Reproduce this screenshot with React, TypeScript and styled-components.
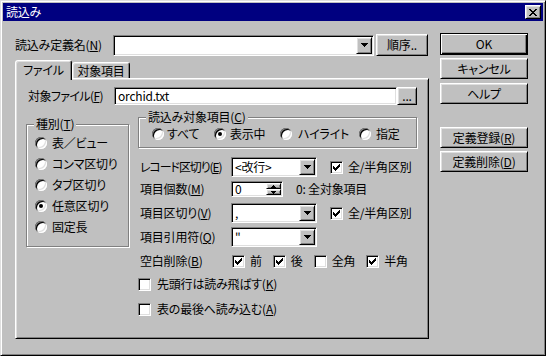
import React from 'react'
import styled, { createGlobalStyle, css } from 'styled-components'

const GlobalStyle = createGlobalStyle`
  html, body { margin: 0; padding: 0; background: #c0c0c0; }
  body {
    font-family: "Noto Sans CJK JP", "Liberation Sans", sans-serif;
    font-size: 12px;
    color: #000;
  }
  * { box-sizing: border-box; }
  u { text-underline-offset: 1px; }
`

const raised = css`
  border: 1px solid;
  border-color: #fff #000 #000 #fff;
  box-shadow: inset 1px 1px 0 #dfdfdf, inset -1px -1px 0 #808080;
`

const sunken = css`
  border: 1px solid;
  border-color: #808080 #fff #fff #808080;
  box-shadow: inset 1px 1px 0 #000, inset -1px -1px 0 #dfdfdf;
`

const Window = styled.div`
  width: 546px;
  height: 356px;
  background: #c0c0c0;
  border: 1px solid;
  border-color: #dfdfdf #000 #000 #dfdfdf;
  box-shadow: inset 1px 1px 0 #fff, inset -1px -1px 0 #808080;
  padding: 2px;
  display: flex;
  flex-direction: column;
  font-feature-settings: "palt";
  letter-spacing: -0.2px;
  line-height: 14px;
`

const TitleBar = styled.div`
  height: 18px;
  background: #000080;
  color: #fff;
  display: flex;
  align-items: center;
  justify-content: space-between;
  padding: 0 2px 0 3px;
`

const CloseButton = styled.div`
  ${raised};
  width: 16px;
  height: 14px;
  background: #c0c0c0;
  display: flex;
  align-items: center;
  justify-content: center;
`

const Body = styled.div`
  display: flex;
  gap: 11px;
  padding: 12px 0 0 12px;
`

const LeftColumn = styled.div`
  width: 414px;
  padding-top: 1px;
  display: flex;
  flex-direction: column;
`

const RightColumn = styled.div`
  width: 88px;
  display: flex;
  flex-direction: column;
`

const TopRow = styled.div`
  display: flex;
  align-items: center;
  height: 22px;
`

const Label = styled.span<{ $w?: number; $pl?: number; $ls?: number }>`
  width: ${(p) => (p.$w ? `${p.$w}px` : 'auto')};
  padding-left: ${(p) => p.$pl ?? 0}px;
  letter-spacing: ${(p) => p.$ls ?? -0.2}px;
  white-space: nowrap;
  flex-shrink: 0;
`

const Button = styled.div<{ $w: number; $h: number; $mt?: number; $ml?: number; $default?: boolean }>`
  ${raised};
  width: ${(p) => p.$w}px;
  height: ${(p) => p.$h}px;
  margin-top: ${(p) => p.$mt ?? 0}px;
  margin-left: ${(p) => p.$ml ?? 0}px;
  background: #c0c0c0;
  display: flex;
  align-items: center;
  justify-content: center;
  white-space: nowrap;
  flex-shrink: 0;
  ${(p) =>
    p.$default &&
    css`
      border-color: #000;
      box-shadow: inset 1px 1px 0 #fff, inset -1px -1px 0 #000, inset -2px -2px 0 #808080;
    `}
`

const Field = styled.div<{ $w: number; $h: number }>`
  ${sunken};
  width: ${(p) => p.$w}px;
  height: ${(p) => p.$h}px;
  background: #fff;
  padding: 1px;
  display: flex;
  align-items: center;
  flex-shrink: 0;
`

const FieldText = styled.span`
  flex: 1;
  padding-left: 2px;
  line-height: 12px;
  white-space: nowrap;
`

const DropButton = styled.div`
  ${raised};
  width: 16px;
  align-self: stretch;
  background: #c0c0c0;
  display: flex;
  align-items: center;
  justify-content: center;
`

const SpinButtons = styled.div`
  width: 15px;
  align-self: stretch;
  display: flex;
  flex-direction: column;
`

const SpinButton = styled.div`
  ${raised};
  flex: 1;
  background: #c0c0c0;
  display: flex;
  align-items: center;
  justify-content: center;
`

const TabStrip = styled.div`
  display: flex;
  align-items: flex-end;
  height: 20px;
  margin-top: 4px;
  margin-bottom: -2px;
  position: relative;
  z-index: 1;
`

const Tab = styled.div<{ $active?: boolean }>`
  border: 1px solid;
  border-bottom: none;
  border-color: #fff #000 transparent #fff;
  box-shadow: inset 1px 1px 0 #dfdfdf, inset -1px 0 0 #808080;
  border-radius: 3px 3px 0 0;
  background: #c0c0c0;
  width: ${(p) => (p.$active ? 57 : 58)}px;
  height: ${(p) => (p.$active ? 20 : 16)}px;
  margin-bottom: ${(p) => (p.$active ? 0 : 2)}px;
  display: flex;
  align-items: center;
  justify-content: center;
  padding-bottom: ${(p) => (p.$active ? 2 : 0)}px;
`

const Panel = styled.div`
  ${raised};
  height: 261px;
  padding: 8px 0 0 10px;
  display: flex;
  flex-direction: column;
`

const FileRow = styled.div`
  display: flex;
  align-items: center;
  height: 18px;
`

const MainRow = styled.div`
  display: flex;
  margin-top: 12px;
`

const Group = styled.div<{ $w: number; $h: number; $mt?: number; $pt: number; $pl: number }>`
  position: relative;
  width: ${(p) => p.$w}px;
  height: ${(p) => p.$h}px;
  margin-top: ${(p) => p.$mt ?? 0}px;
  border: 1px solid #808080;
  box-shadow: inset 1px 1px 0 #fff, 1px 1px 0 #fff;
  padding: ${(p) => p.$pt}px 0 0 ${(p) => p.$pl}px;
  flex-shrink: 0;
`

const Legend = styled.span`
  position: absolute;
  top: -8px;
  left: 7px;
  padding: 0 2px;
  background: #c0c0c0;
  white-space: nowrap;
`

const RadioColumn = styled.div`
  display: flex;
  flex-direction: column;
`

const RadioRow = styled.div`
  display: flex;
`

const Option = styled.label<{ $w?: number; $h?: number; $gap?: number }>`
  display: flex;
  align-items: center;
  gap: ${(p) => p.$gap ?? 5}px;
  width: ${(p) => (p.$w ? `${p.$w}px` : 'auto')};
  height: ${(p) => p.$h ?? 14}px;
  white-space: nowrap;
  flex-shrink: 0;
`

const RadioCircle = styled.span<{ $on?: boolean }>`
  width: 12px;
  height: 12px;
  border-radius: 50%;
  background: #fff;
  box-shadow: inset 1px 1px 0 #808080, inset -1px -1px 0 #fff, inset 2px 2px 0 #000,
    inset -2px -2px 0 #dfdfdf;
  display: inline-flex;
  align-items: center;
  justify-content: center;
  flex-shrink: 0;
  &::after {
    content: '';
    width: 4px;
    height: 4px;
    border-radius: 50%;
    background: ${(p) => (p.$on ? '#000' : 'transparent')};
  }
`

const CheckBox = styled.span`
  ${sunken};
  width: 13px;
  height: 13px;
  background: #fff;
  display: inline-flex;
  flex-shrink: 0;
`

const OptionsColumn = styled.div`
  width: 279px;
  margin-left: 9px;
  display: flex;
  flex-direction: column;
`

const FormRow = styled.div<{ $h: number; $mt: number }>`
  display: flex;
  align-items: center;
  height: ${(p) => p.$h}px;
  margin-top: ${(p) => p.$mt}px;
`

const Note = styled.span<{ $ml: number }>`
  margin-left: ${(p) => p.$ml}px;
  white-space: nowrap;
  display: flex;
  align-items: center;
`

const ChecksGroup = styled.div`
  display: flex;
  align-items: center;
  gap: 11px;
`

const DownArrow = () => (
  <svg width="7" height="4" viewBox="0 0 7 4" shapeRendering="crispEdges">
    <path d="M0 0h7v1h-1v1h-1v1h-1v1h-1v-1h-1v-1h-1v-1h-1z" fill="#000" />
  </svg>
)

const SmallArrow = ({ up }: { up?: boolean }) => (
  <svg width="5" height="3" viewBox="0 0 5 3" shapeRendering="crispEdges">
    <path d={up ? 'M2 0h1v1h1v1h1v1h-5v-1h1v-1h1z' : 'M0 0h5v1h-1v1h-1v1h-1v-1h-1v-1h-1z'} fill="#000" />
  </svg>
)

const CheckMark = () => {
  const tops = [2, 3, 4, 3, 2, 1, 0]
  const d = tops.map((t, i) => `M${2 + i} ${2 + t}h1v3h-1z`).join('')
  return (
    <svg width="11" height="11" viewBox="0 0 11 11" shapeRendering="crispEdges">
      <path d={d} fill="#000" />
    </svg>
  )
}

const CloseGlyph = () => (
  <svg width="8" height="7" viewBox="0 0 8 7" shapeRendering="crispEdges">
    <path
      d="M0 0h2v1h1v1h2v-1h1v-1h2v1h-1v1h-1v1h-1v1h1v1h1v1h1v1h-2v-1h-1v-1h-2v1h-1v1h-2v-1h1v-1h1v-1h1v-1h-1v-1h-1v-1h-1z"
      fill="#000"
    />
  </svg>
)

const Check = ({ on, children, gap }: { on?: boolean; children?: React.ReactNode; gap?: number }) => (
  <Option $gap={gap}>
    <CheckBox>{on && <CheckMark />}</CheckBox>
    <span>{children}</span>
  </Option>
)

const Radio = ({ on, children, w, h, gap }: { on?: boolean; children: React.ReactNode; w?: number; h?: number; gap?: number }) => (
  <Option $w={w} $h={h} $gap={gap}>
    <RadioCircle $on={on} />
    <span>{children}</span>
  </Option>
)

const Combo = ({ w, h, value }: { w: number; h: number; value?: string }) => (
  <Field $w={w} $h={h}>
    <FieldText>{value}</FieldText>
    <DropButton>
      <DownArrow />
    </DropButton>
  </Field>
)

export default function App() {
  return (
    <>
      <GlobalStyle />
      <Window>
        <TitleBar>
          <span>読込み</span>
          <CloseButton>
            <CloseGlyph />
          </CloseButton>
        </TitleBar>
        <Body>
          <LeftColumn>
            <TopRow>
              <Label $w={98}>
                読込み定義名(<u>N</u>)
              </Label>
              <Combo w={261} h={21} />
              <Button $w={52} $h={22} $ml={2}>
                順序..
              </Button>
            </TopRow>
            <TabStrip>
              <Tab $active>ファイル</Tab>
              <Tab>対象項目</Tab>
            </TabStrip>
            <Panel>
              <FileRow>
                <Label $w={88} $pl={2} $ls={-0.6}>
                  対象ファイル(<u>F</u>)
                </Label>
                <Field $w={283} $h={18}>
                  <FieldText>orchid.txt</FieldText>
                </Field>
                <Button $w={20} $h={18}>
                  ...
                </Button>
              </FileRow>
              <MainRow>
                <Group $w={103} $h={123} $mt={7} $pt={7} $pl={8}>
                  <Legend>
                    種別(<u>T</u>)
                  </Legend>
                  <RadioColumn>
                    <Radio h={21}>表／ビュー</Radio>
                    <Radio h={21}>コンマ区切り</Radio>
                    <Radio h={21}>タブ区切り</Radio>
                    <Radio h={21} on>
                      任意区切り
                    </Radio>
                    <Radio h={21}>固定長</Radio>
                  </RadioColumn>
                </Group>
                <OptionsColumn>
                  <Group $w={279} $h={31} $pt={9} $pl={13}>
                    <Legend>
                      読込み対象項目(<u>C</u>)
                    </Legend>
                    <RadioRow>
                      <Radio w={62} gap={3}>
                        すべて
                      </Radio>
                      <Radio w={66} gap={4} on>
                        表示中
                      </Radio>
                      <Radio w={79} gap={6}>
                        ハイライト
                      </Radio>
                      <Radio gap={5}>指定</Radio>
                    </RadioRow>
                  </Group>
                  <FormRow $h={20} $mt={9}>
                    <Label $w={93} $pl={2} $ls={-1.1}>
                      レコード区切り(<u>E</u>)
                    </Label>
                    <Combo w={86} h={20} value="<改行>" />
                    <Note $ml={13}>
                      <Check on>全/半角区別</Check>
                    </Note>
                  </FormRow>
                  <FormRow $h={16} $mt={4}>
                    <Label $w={93} $pl={2}>
                      項目個数(<u>M</u>)
                    </Label>
                    <Field $w={52} $h={16}>
                      <FieldText>0</FieldText>
                      <SpinButtons>
                        <SpinButton>
                          <SmallArrow up />
                        </SpinButton>
                        <SpinButton>
                          <SmallArrow />
                        </SpinButton>
                      </SpinButtons>
                    </Field>
                    <Note $ml={13}>0: 全対象項目</Note>
                  </FormRow>
                  <FormRow $h={20} $mt={6}>
                    <Label $w={93} $pl={2}>
                      項目区切り(<u>V</u>)
                    </Label>
                    <Combo w={86} h={20} value="," />
                    <Note $ml={13}>
                      <Check on>全/半角区別</Check>
                    </Note>
                  </FormRow>
                  <FormRow $h={20} $mt={4}>
                    <Label $w={93} $pl={2}>
                      項目引用符(<u>Q</u>)
                    </Label>
                    <Combo w={86} h={20} value={'"'} />
                  </FormRow>
                  <FormRow $h={14} $mt={7}>
                    <Label $w={94} $pl={2}>
                      空白削除(<u>B</u>)
                    </Label>
                    <ChecksGroup>
                      <Check on>前</Check>
                      <Check on>後</Check>
                      <Check>全角</Check>
                      <Check on>半角</Check>
                    </ChecksGroup>
                  </FormRow>
                  <FormRow $h={14} $mt={9}>
                    <Check gap={6}>
                      先頭行は読み飛ばす(<u>K</u>)
                    </Check>
                  </FormRow>
                  <FormRow $h={14} $mt={11}>
                    <Check gap={6}>
                      表の最後へ読み込む(<u>A</u>)
                    </Check>
                  </FormRow>
                </OptionsColumn>
              </MainRow>
            </Panel>
          </LeftColumn>
          <RightColumn>
            <Button $w={88} $h={22} $default>
              OK
            </Button>
            <Button $w={88} $h={21} $mt={3}>
              キャンセル
            </Button>
            <Button $w={88} $h={21} $mt={4}>
              ヘルプ
            </Button>
            <Button $w={88} $h={21} $mt={23}>
              定義登録(<u>R</u>)
            </Button>
            <Button $w={88} $h={21} $mt={3}>
              定義削除(<u>D</u>)
            </Button>
          </RightColumn>
        </Body>
      </Window>
    </>
  )
}
